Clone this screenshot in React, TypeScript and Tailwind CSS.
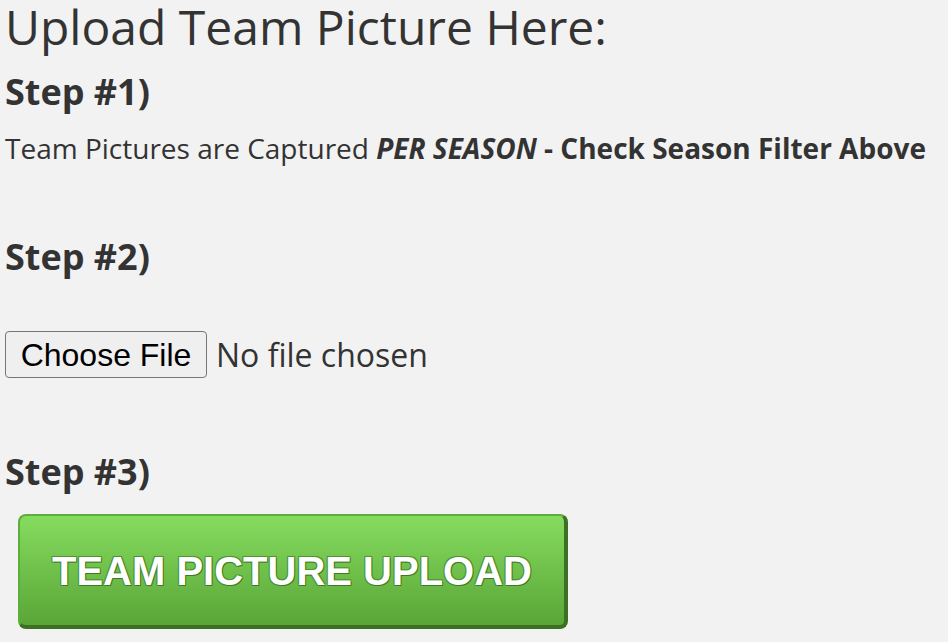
import React from 'react';

const App: React.FC = () => {
  return (
    <div className="min-h-[642px] w-full bg-[#f2f2f2] text-[#333] font-['Open_Sans',sans-serif] pl-[5px]">
      <h2 className="text-[48px] leading-[53px] font-normal">Upload Team Picture Here:</h2>

      {/* Step 1 */}
      <h4 className="text-[36px] leading-[40px] font-bold mt-[19px]">Step #1)</h4>
      <p className="text-[28px] leading-[40px] mt-[16px]">
        Team Pictures are Captured{' '}
        <b>
          <i>PER SEASON</i> - Check Season Filter Above
        </b>
      </p>

      {/* Step 2 */}
      <h4 className="text-[36px] leading-[40px] font-bold mt-[69px]">Step #2)</h4>
      <div className="flex items-center mt-[54px]">
        <button className="h-[47px] w-[202px] border border-[#767676] rounded-[4px] bg-[#efefef] text-black text-[32px] leading-none font-['Liberation_Sans',sans-serif]">
          Choose File
        </button>
        <span className="ml-[9px] text-[32px] leading-[47px]">No file chosen</span>
      </div>

      {/* Step 3 */}
      <h4 className="text-[36px] leading-[40px] font-bold mt-[74px]">Step #3)</h4>
      <div className="pl-[13px] mt-[22px]">
        <button className="w-[550px] h-[115px] rounded-[8px] border-2 border-[#5fae3b] border-r-[4px] border-b-[4px] border-r-[#3c7023] border-b-[#3c7023] bg-gradient-to-b from-[#86dc5f] to-[#5aa537] text-white text-[40px] font-bold font-['Liberation_Sans',sans-serif] [text-shadow:1px_1px_0_#3d7a23,-1px_-1px_0_#4d9530,1px_-1px_0_#4d9530,-1px_1px_0_#4d9530]">
          TEAM PICTURE UPLOAD
        </button>
      </div>
    </div>
  );
};

export default App;
